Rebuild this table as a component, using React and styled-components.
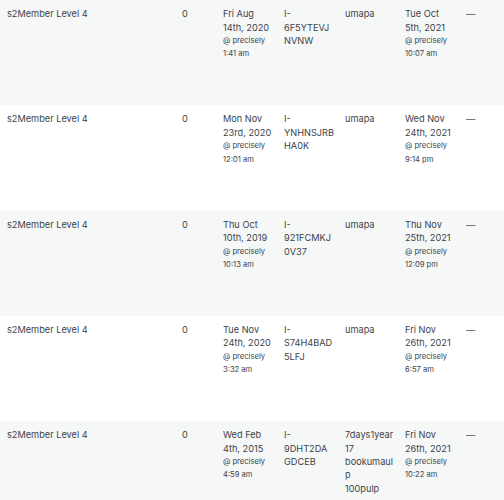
import React from "react";
import styled, { createGlobalStyle } from "styled-components";

const Global = createGlobalStyle`
  html, body { margin: 0; padding: 0; background: #ffffff; }
  body {
    font-family: Inter, "Noto Sans", "Liberation Sans", sans-serif;
    color: #3c434a;
    -webkit-font-smoothing: antialiased;
  }
`;

const Table = styled.div`
  display: flex;
  flex-direction: column;
  width: 504px;
  overflow: hidden;
`;

const Row = styled.div`
  display: grid;
  grid-template-columns: 175px 41px 61px 61px 60px 61px 1fr;
  height: 105.25px;
  background: ${(p) => (p.$alt ? "#f6f7f7" : "#ffffff")};
  flex-shrink: 0;
`;

const Cell = styled.div`
  padding: 7.2px 7px 0 7px;
  font-size: 9.2px;
  line-height: 13.4px;
  color: #3c434a;
  display: flex;
  flex-direction: column;
  white-space: nowrap;
`;

const Line = styled.span`
  display: block;
  font-size: ${(p) => (p.$small ? "7.6px" : "9.2px")};
  line-height: 13.4px;
`;

const Dash = styled.span`
  display: block;
  color: #50575e;
  font-size: 9.2px;
  line-height: 13.4px;
`;

const DateCell = ({ d }) => (
  <Cell>
    <Line>{d[0]}</Line>
    <Line>{d[1]}</Line>
    <Line $small>@ precisely</Line>
    <Line $small>{d[2]}</Line>
  </Cell>
);

const LinesCell = ({ lines }) => (
  <Cell>
    {lines.map((l, i) => (
      <Line key={i}>{l}</Line>
    ))}
  </Cell>
);

const rows = [
  {
    start: ["Fri Aug", "14th, 2020", "1:41 am"],
    id: ["I-", "6F5YTEVJ", "NVNW"],
    user: ["umapa"],
    end: ["Tue Oct", "5th, 2021", "10:07 am"],
  },
  {
    start: ["Mon Nov", "23rd, 2020", "12:01 am"],
    id: ["I-", "YNHNSJRB", "HA0K"],
    user: ["umapa"],
    end: ["Wed Nov", "24th, 2021", "9:14 pm"],
  },
  {
    start: ["Thu Oct", "10th, 2019", "10:13 am"],
    id: ["I-", "921FCMKJ", "0V37"],
    user: ["umapa"],
    end: ["Thu Nov", "25th, 2021", "12:09 pm"],
  },
  {
    start: ["Tue Nov", "24th, 2020", "3:32 am"],
    id: ["I-", "S74H4BAD", "5LFJ"],
    user: ["umapa"],
    end: ["Fri Nov", "26th, 2021", "6:57 am"],
  },
  {
    start: ["Wed Feb", "4th, 2015", "4:59 am"],
    id: ["I-", "9DHT2DA", "GDCEB"],
    user: ["7days1year", "17", "bookumaul", "p", "100pulp"],
    end: ["Fri Nov", "26th, 2021", "10:22 am"],
  },
];

export default function App() {
  return (
    <>
      <Global />
      <Table>
        {rows.map((r, i) => (
          <Row key={i} $alt={i % 2 === 0}>
            <LinesCell lines={["s2Member Level 4"]} />
            <LinesCell lines={["0"]} />
            <DateCell d={r.start} />
            <LinesCell lines={r.id} />
            <LinesCell lines={r.user} />
            <DateCell d={r.end} />
            <Cell>
              <Dash>—</Dash>
            </Cell>
          </Row>
        ))}
      </Table>
    </>
  );
}
